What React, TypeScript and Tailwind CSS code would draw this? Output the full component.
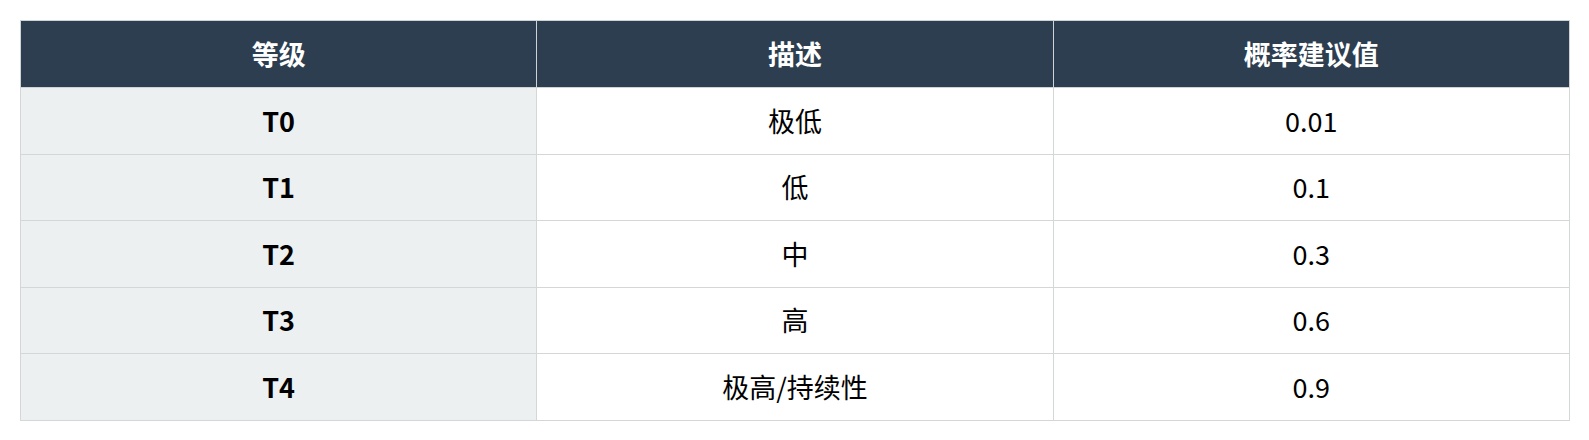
const rows = [
  { level: 'T0', desc: '极低', value: '0.01' },
  { level: 'T1', desc: '低', value: '0.1' },
  { level: 'T2', desc: '中', value: '0.3' },
  { level: 'T3', desc: '高', value: '0.6' },
  { level: 'T4', desc: '极高/持续性', value: '0.9' },
];

export default function App() {
  return (
    <div
      className="bg-white p-5 w-[1589px] h-[440px]"
      style={{ fontFamily: '"Noto Sans CJK SC", "Noto Sans", sans-serif' }}
    >
      <table className="w-[1550px] table-fixed border-collapse text-[27px] text-black">
        <thead>
          <tr className="bg-[#2c3e50] text-white h-[67px]">
            <th className="border border-[#cfd3d6] font-bold">等级</th>
            <th className="border border-[#cfd3d6] font-bold">描述</th>
            <th className="border border-[#cfd3d6] font-bold">概率建议值</th>
          </tr>
        </thead>
        <tbody>
          {rows.map((r) => (
            <tr key={r.level} className="h-[66.6px]">
              <td className="border border-[#d4d6d8] bg-[#ecf0f1] text-center font-bold">
                {r.level}
              </td>
              <td className="border border-[#d4d6d8] bg-white text-center">{r.desc}</td>
              <td className="border border-[#d4d6d8] bg-white text-center">{r.value}</td>
            </tr>
          ))}
        </tbody>
      </table>
    </div>
  );
}
